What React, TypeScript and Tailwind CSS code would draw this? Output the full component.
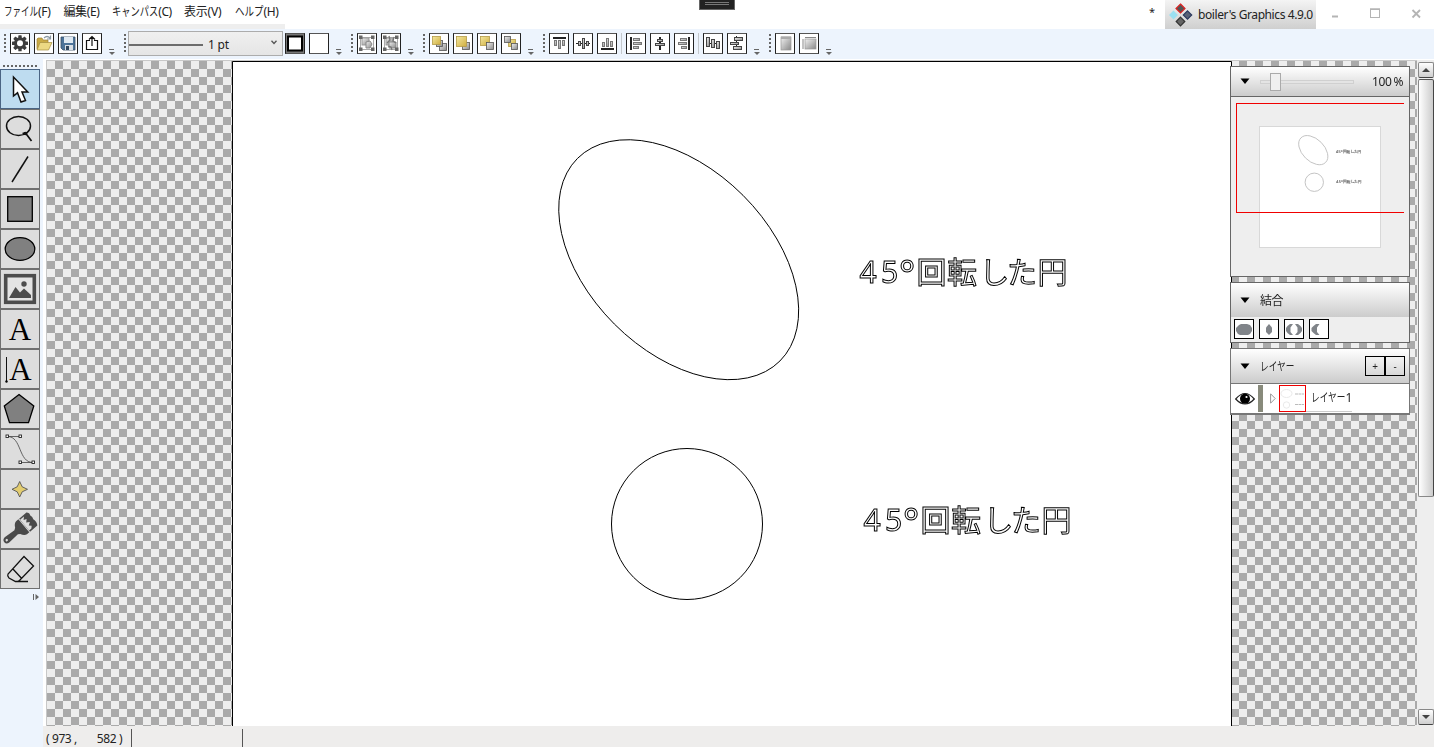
import React from "react";

type Kids = { children?: React.ReactNode };

function Kana({ text, size = 12, scale = 0.7 }: { text: string; size?: number; scale?: number }) {
  return (
    <span className="inline-block whitespace-nowrap tracking-normal" style={{ width: text.length * size * scale }}>
      <span className="inline-block origin-left" style={{ transform: `scaleX(${scale})` }}>
        {text}
      </span>
    </span>
  );
}

function Grip() {
  return (
    <svg className="mt-[5px] h-[20px] w-[2px] shrink-0" viewBox="0 0 2 20">
      {[0, 4, 8, 12, 16].map((y) => (
        <rect key={y} y={y} width="2" height="2" fill="#666" />
      ))}
    </svg>
  );
}

function Overflow() {
  return (
    <svg className="ml-[7px] mt-[20px] h-[6px] w-[6px] shrink-0" viewBox="0 0 6 6">
      <rect width="5" height="1" fill="#666" />
      <path d="M0 3H6L3 6Z" fill="#666" />
    </svg>
  );
}

function Btn({ children }: Kids) {
  return (
    <div className="mt-[4px] h-[21px] w-[20px] shrink-0 border border-[#222] border-y-[#555] bg-white">
      <svg className="block h-[19px] w-[18px]" viewBox="0 0 18 19">
        {children}
      </svg>
    </div>
  );
}

function Sep() {
  return <div className="mt-[4px] h-[21px] w-px shrink-0 bg-[#c4c8cc]" />;
}

const Y = "url(#gold)";
const G = "url(#steel)";

function Sq({ x, y, f, s = 7 }: { x: number; y: number; f: string; s?: number }) {
  return <rect x={x + 0.5} y={y + 0.5} width={s} height={s} fill={f} stroke={f === Y ? "#b39b46" : "#555"} strokeWidth="0.8" />;
}

function Bar({ x, y, w, h, dark, edge = "#777" }: { x: number; y: number; w: number; h: number; dark?: boolean; edge?: string }) {
  return dark ? (
    <rect x={x} y={y} width={w} height={h} fill="#222" />
  ) : (
    <rect x={x + 0.5} y={y + 0.5} width={w - 1} height={h - 1} fill={G} stroke={edge} strokeWidth="1" />
  );
}

function Toolbar() {
  return (
    <div className="flex h-[30px] shrink-0 items-start bg-[#edf4fd] pl-[4px]">
      <div className="flex w-[120px] gap-[4px]">
        <Grip />
        <Btn>
          <g fill="#3d3d3d">
            {[0, 45, 90, 135].map((a) => (
              <rect key={a} x="7.3" y="1.3" width="3.4" height="16" rx="0.6" transform={`rotate(${a} 9 9.3)`} />
            ))}
            <circle cx="9" cy="9.3" r="6" />
          </g>
          <circle cx="9" cy="9.3" r="3" fill="#fff" />
        </Btn>
        <Btn>
          <path d="M2 15V5L3 4H7L8 6H13V15Z" fill="#c9ab45" stroke="#9d8337" strokeWidth="0.7" />
          <path d="M2 16L5 8.5H17L13.5 16Z" fill="#ecd983" stroke="#a48c40" strokeWidth="0.7" />
          <path d="M9 4Q12 1 15 4M15.5 1.5V5H12" fill="none" stroke="#8998a3" strokeWidth="1.2" />
        </Btn>
        <Btn>
          <path d="M2 3H16V16H4L2 14Z" fill="#4c7399" stroke="#354c66" strokeWidth="0.8" />
          <rect x="5" y="3" width="9" height="6" fill="#dfe9f2" />
          <rect x="6" y="11" width="8" height="5" fill="#d9dfe5" />
          <rect x="7" y="12" width="3" height="4" fill="#30465e" />
        </Btn>
        <Btn>
          <path d="M7 6.5H3.5V15.5H14.5V6.5H11M9 12V2.5M6 5.5L9 2.5L12 5.5" fill="none" stroke="#111" strokeWidth="1.2" />
        </Btn>
        <div className="-ml-[4px]"><Overflow /></div>
      </div>
      <div className="flex w-[227px]">
        <Grip />
        <div className="ml-[2px] mt-[2px] flex h-[25px] w-[155px] items-center border border-[#acacac] bg-linear-to-b from-[#f0f0f0] to-[#e5e5e5]">
          <div className="mt-[2px] h-[2px] w-[74px] bg-[#6c6c6c]" />
          <span className="ml-[5px] mt-[3px] w-[61px] text-[12px] leading-[20px] tracking-[-0.2px]">1 pt</span>
          <svg className="mb-[2px] ml-[2px] h-[5px] w-[6px]" viewBox="0 0 6 5"><path d="M0.5 0.7L3 3.5L5.5 0.7" fill="none" stroke="#555" strokeWidth="1.3" /></svg>
        </div>
        <div className="ml-[2px] mr-[4px] flex">
          <Btn>
            <rect width="18" height="19" fill="#777" />
            <rect x="2" y="2.5" width="14" height="14" fill="#fff" stroke="#000" strokeWidth="2" />
          </Btn>
        </div>
        <Btn />
        <Overflow />
      </div>
      <div className="flex w-[72px] gap-[4px]">
        <Grip />
        {[0, 1].map((k) => (
          <Btn key={k}>
            <rect x="2.5" y="3.5" width="13" height="12" fill="none" stroke="#aaa" />
            <rect x="4" y="4" width="7" height="7" fill={G} stroke="#999" />
            <path d={k ? "M7 8H14V14H7Z" : "M8 8L12 7L14 10L12 14H8Z"} fill={G} stroke="#888" />
            {[[1, 1], [13, 1], [1, 13], [13, 13]].map(([x, y]) => (
              <rect key={`${x}-${y}`} x={x} y={y + 0.5} width="3.5" height="3.5" fill="#666" />
            ))}
            {k === 1 && <path d="M7 2L8 6L5 9M12 3L11 7L14 9M6 12L9 13L10 16" fill="none" stroke="#777" strokeWidth="1.3" />}
          </Btn>
        ))}
        <div className="-ml-[4px]"><Overflow /></div>
      </div>
      <div className="flex w-[120px] gap-[4px]">
        <Grip />
        <Btn><Sq x={9} y={9} f={G} /><Sq x={6} y={6} f={G} s={6} /><Sq x={2} y={2} f={Y} s={8} /></Btn>
        <Btn><Sq x={8} y={8} f={G} /><Sq x={2} y={2} f={Y} s={10} /></Btn>
        <Btn><Sq x={2} y={2} f={Y} s={9} /><Sq x={8} y={8} f={G} /></Btn>
        <Btn><Sq x={6} y={5} f={Y} s={7} /><Sq x={2} y={2} f={G} s={6} /><Sq x={9} y={9} f={G} s={6} /></Btn>
        <div className="-ml-[4px]"><Overflow /></div>
      </div>
      <div className="flex w-[226px] gap-[4px]">
        <Grip />
        <Btn><Bar x={3} y={3} w={13} h={2} dark /><Bar x={4} y={6} w={3} h={6} /><Bar x={8} y={6} w={3} h={9} /><Bar x={12} y={6} w={3} h={6} /></Btn>
        <Btn><Bar x={2} y={9} w={14} h={1} dark /><Bar x={4} y={7} w={3} h={5} edge="#444" /><Bar x={8} y={4} w={3} h={11} edge="#444" /><Bar x={12} y={7} w={3} h={5} edge="#444" /></Btn>
        <Btn><Bar x={3} y={14} w={13} h={2} dark /><Bar x={4} y={8} w={3} h={5} /><Bar x={8} y={4} w={3} h={9} /><Bar x={12} y={7} w={3} h={6} /></Btn>
        <Sep />
        <Btn><Bar x={3} y={3} w={2} h={13} dark /><Bar x={6} y={4} w={7} h={3} /><Bar x={6} y={8} w={9} h={3} /><Bar x={6} y={12} w={6} h={3} /></Btn>
        <Btn><Bar x={8} y={3} w={2} h={13} dark /><Bar x={6} y={5} w={6} h={3} edge="#444" /><Bar x={4} y={9} w={10} h={3} edge="#444" /></Btn>
        <Btn><Bar x={13} y={3} w={2} h={13} dark /><Bar x={5} y={4} w={7} h={3} /><Bar x={3} y={8} w={9} h={3} /><Bar x={6} y={12} w={6} h={3} /></Btn>
        <Sep />
        <Btn><Bar x={2} y={9} w={14} h={1} dark /><Bar x={2} y={3} w={4} h={10} edge="#444" /><Bar x={7} y={5} w={4} h={9} edge="#444" /><Bar x={12} y={7} w={4} h={8} edge="#444" /></Btn>
        <Btn><Bar x={8} y={2} w={1} h={14} dark /><Bar x={6} y={3} w={9} h={4} edge="#444" /><Bar x={2} y={8} w={9} h={3} edge="#444" /><Bar x={5} y={12} w={9} h={4} edge="#444" /></Btn>
        <div className="-ml-[4px]"><Overflow /></div>
      </div>
      <div className="flex w-[72px] gap-[4px]">
        <Grip />
        <Btn><rect x="5" y="3" width="10" height="13" fill={G} stroke="#999" strokeWidth="0.7" /><rect x="5" y="2.5" width="10" height="2.5" fill="#aaa" /></Btn>
        <Btn><rect x="5" y="5" width="11" height="10" fill={G} stroke="#999" strokeWidth="0.7" /><path d="M3 5V15M5 3.5H16" stroke="#888" strokeWidth="1" /></Btn>
        <div className="-ml-[4px]"><Overflow /></div>
      </div>
    </div>
  );
}

function Tool({ active, children }: Kids & { active?: boolean }) {
  return (
    <div className={active ? "h-[40px] w-[40px] border border-[#4a6484] bg-[#bedcf0]" : "h-[40px] w-[40px] border border-[#707070] bg-[#dddddd]"}>
      <svg className="block h-[38px] w-[38px]" viewBox="1 1 38 38">{children}</svg>
    </div>
  );
}

function Tools() {
  return (
    <div className="flex w-[43px] shrink-0 flex-col bg-[#edf4fd]">
      <svg className="ml-[3px] mt-[6px] h-[2px] w-[36px]" viewBox="0 0 36 2">
        {[0, 1, 2, 3, 4, 5, 6, 7, 8].map((i) => <rect key={i} x={i * 4} width="2" height="2" fill="#666" />)}
      </svg>
      <div className="mt-[2px] flex flex-col">
        <Tool active><path d="M13.5 8V27L17.5 23.8L21 33L25.5 31.5L22 23H27.8Z" fill="#fff" stroke="#111" strokeWidth="1.5" /></Tool>
        <Tool>
          <ellipse cx="18.5" cy="17" rx="12" ry="9.5" fill="none" stroke="#111" strokeWidth="1.5" />
          <path d="M22.5 24.5L27.5 23.5M25.5 24L31.5 32" fill="none" stroke="#111" strokeWidth="1.7" />
          <circle cx="25.3" cy="24.5" r="1.8" fill="#111" />
        </Tool>
        <Tool><path d="M12 33L28 7.5" stroke="#111" strokeWidth="1.5" /></Tool>
        <Tool><rect x="7.7" y="7.7" width="24.6" height="24.6" fill="#808080" stroke="#000" strokeWidth="1.3" /></Tool>
        <Tool><ellipse cx="20" cy="20" rx="14.8" ry="11.4" fill="#808080" stroke="#000" strokeWidth="1.3" /></Tool>
        <Tool>
          <rect x="5.7" y="6.7" width="28.6" height="26.6" fill="#e4e4e4" stroke="#4d4d4d" strokeWidth="3.6" />
          <path d="M9 29L15.5 18L20 23.5L24 19.5L31 26V29Z" fill="#4d4d4d" />
          <circle cx="24" cy="15" r="2.7" fill="#4d4d4d" />
        </Tool>
        <Tool><text x="20" y="30.5" textAnchor="middle" className="font-['Liberation_Serif',serif] text-[31px] tracking-normal">A</text></Tool>
        <Tool>
          <text x="20.5" y="30.5" textAnchor="middle" className="font-['Liberation_Serif',serif] text-[31px] tracking-normal">A</text>
          <path d="M6.5 8V33" stroke="#111" strokeWidth="1" /><circle cx="6.5" cy="32.5" r="1.2" />
        </Tool>
        <Tool><path d="M19 5.5L33.8 17L28.5 33.7H9.5L4.3 17Z" fill="#808080" stroke="#000" strokeWidth="1.3" /></Tool>
        <Tool>
          <path d="M7.5 7.5H20.5M20 33.5H33M7.5 7.5C22 7.5 18 33.5 33 33.5" fill="none" stroke="#444" strokeWidth="0.8" />
          {[[7, 7], [20, 7], [20, 33], [33, 33]].map(([x, y]) => (
            <rect key={`${x}-${y}`} x={x - 1} y={y - 1} width="2.5" height="2.5" fill="#fff" stroke="#222" strokeWidth="0.9" />
          ))}
        </Tool>
        <Tool><path d="M19.7 12.5L22.2 17.8L27.5 20.3L22.2 22.8L19.7 28L17.2 22.8L12 20.3L17.2 17.8Z" fill="#e2cc70" stroke="#555" strokeWidth="0.9" /></Tool>
        <Tool>
          <g transform="translate(20 20) rotate(50)" fill="#4a4a4a">
            <path d="M-8.5 -5V-2Q-8 1 -4 3L-2.7 5L-3.5 17Q-3 20.5 0 20.5T3.5 17L2.7 5L4 3Q8 1 8.5 -2V-5Z" />
            <path d="M-8.5 -6V-15.5Q-6.5 -18 -4 -16.5Q-1 -17.5 1 -16.5Q5 -18 8.5 -15.5V-6Z" />
            <path d="M-7 -6V-11L-4.5 -8.5L-3.5 -11.5L-1 -9L1 -12L3 -9L5 -11L7 -9V-6Z" fill="#dddddd" />
            <circle cy="17.3" r="1.2" fill="#dddddd" />
          </g>
        </Tool>
        <Tool>
          <path d="M24 7.5L33.5 17L19.5 31.5Q18 32.5 15.5 32.5L9 29Q7 27 8 25ZM12.5 19.5L21.5 29.2M15 32.5H28" fill="none" stroke="#111" strokeWidth="1.3" />
        </Tool>
      </div>
      <svg className="ml-[33px] mt-[5px] h-[6px] w-[6px]" viewBox="0 0 6 6"><path d="M0 0H1V6H0ZM2.5 0L6 3L2.5 6Z" fill="#666" /></svg>
    </div>
  );
}

function OutlineText({ dx, y, thumb }: { dx: number; y: number; thumb?: boolean }) {
  const at = (...xs: number[]) => xs.map((v) => v + dx).join(" ");
  return (
    <text
      y={y}
      fill={thumb ? "#999" : "none"}
      stroke={thumb ? "#777" : "#000"}
      strokeWidth={thumb ? 2 : 1}
      className="font-['Noto_Sans','Noto_Sans_CJK_JP',sans-serif] text-[30px] tracking-normal"
    >
      <tspan x={at(859.5, 881)}>45</tspan>
      <tspan x={at(899)} dy="5" className="text-[38px]">°</tspan>
      <tspan x={at(916.5, 947, 979.5, 1007, 1037.5)} dy="-5.5">回転した円</tspan>
    </text>
  );
}

function Artwork({ thumb }: { thumb?: boolean }) {
  const stroke = thumb ? "#c4c4c4" : "#000";
  return (
    <>
      <ellipse cx="678.7" cy="259.7" rx="143.2" ry="91" transform="rotate(45 678.7 259.7)" fill="none" stroke={stroke} strokeWidth="1" vectorEffect="non-scaling-stroke" />
      <circle cx="687" cy="524" r="75.5" fill="none" stroke={stroke} strokeWidth="1" vectorEffect="non-scaling-stroke" />
      <OutlineText dx={thumb ? 6 : 0} y={283} thumb={thumb} />
      <OutlineText dx={thumb ? 8 : 4} y={531} thumb={thumb} />
    </>
  );
}

function Caret() {
  return <svg className="h-[7px] w-[10px] shrink-0" viewBox="0 0 10 7"><path d="M0.5 0.5H9.5L5 6Z" fill="#000" /></svg>;
}

function Combine({ children }: Kids) {
  return (
    <div className="h-[20px] w-[20px] border border-black bg-white">
      <svg className="block h-[18px] w-[18px]" viewBox="0 0 18 18" fill="#808489">{children}</svg>
    </div>
  );
}

function Panels() {
  return (
    <div className="absolute left-[1183px] top-[5px] flex w-[180px] flex-col gap-[5px]">
      <div className="flex h-[211px] flex-col border border-[#666] bg-[#eee]">
        <div className="flex h-[30px] items-center border-b border-[#666] bg-linear-to-b from-white to-[#cccccc] pl-[9px]">
          <Caret />
          <div className="relative ml-[10px] h-[4px] w-[94px] border border-[#d0d0d0] bg-[#e4e4e4]">
            <div className="absolute left-[9px] top-[-8px] h-[18px] w-[11px] border border-[#aaa] bg-[#f0f0f0]" />
          </div>
          <span className="ml-[18px] whitespace-nowrap text-[12px] [word-spacing:-0.5px]">100 %</span>
        </div>
        <div className="relative ml-[5px] mt-[6px] h-[110px] w-[168px] pl-[23px] pt-[23px]">
          <svg className="block h-[122px] w-[122px]" viewBox="0 0 122 122">
            <rect x="0.5" y="0.5" width="121" height="121" fill="#fff" stroke="#d8d8d8" />
            <g transform="scale(0.1215) translate(-232 -61)"><Artwork thumb /></g>
          </svg>
          <div className="absolute inset-0 border border-r-0 border-[#f00000]" />
        </div>
      </div>
      <div className="flex h-[61px] flex-col border border-[#666] bg-[#eee]">
        <div className="flex h-[34px] items-center gap-[10px] bg-linear-to-b from-white to-[#cccccc] pl-[9px]">
          <Caret /><span className="mt-[2px] text-[12px]">結合</span>
        </div>
        <div className="flex gap-[5px] pl-[3px] pt-[2px]">
          <Combine><path d="M4 5L6 4H12L15 5L17 8V11L15 14L13 15H5L3 14L1 11V8Z" /></Combine>
          <Combine><path d="M9 4L12 7.5V12L9 15L6 12V7.5Z" /></Combine>
          <Combine><path d="M8 4L5.5 7.5V12L8 15H5L2.5 13L1 11V8L2.5 6L5 4ZM10 4L12.5 7.5V12L10 15H13L15.5 13L17 11V8L15.5 6L13 4Z" /></Combine>
          <Combine><path d="M9.5 4L7 7.5V12L9.5 15H6L3.5 13L1.5 11V8L3.5 6L6 4Z" /></Combine>
        </div>
      </div>
      <div className="flex h-[67px] flex-col border border-b-2 border-[#777] bg-white">
        <div className="flex h-[35px] shrink-0 items-center border-b border-[#777] bg-linear-to-b from-white to-[#cccccc] pl-[9px]">
          <Caret />
          <span className="ml-[10px] mt-[2px] w-[105px] text-[12px]"><Kana text="レイヤー" scale={0.72} /></span>
          <div className="flex h-[20px] w-[20px] items-center justify-center border border-black text-[10px]">+</div>
          <div className="flex h-[20px] w-[20px] items-center justify-center border border-black text-[10px]">-</div>
        </div>
        <div className="flex h-[29px] items-center pl-[4px]">
          <svg className="h-[14px] w-[20px]" viewBox="0 0 20 14">
            <path d="M0.7 7Q10-4 19.3 7Q10 17 0.7 7Z" fill="#fff" stroke="#222" strokeWidth="1.2" />
            <circle cx="10" cy="6.7" r="5" /><circle cx="11.5" cy="5" r="1.1" fill="#fff" />
          </svg>
          <div className="ml-[3px] h-[27px] w-[5px] bg-[#888a7b]" />
          <svg className="ml-[7px] h-[11px] w-[6px]" viewBox="0 0 6 11"><path d="M0.6 0.8V10.2L5.2 5.5Z" fill="#fff" stroke="#999" /></svg>
          <svg className="ml-[3px] h-[27px] w-[27px]" viewBox="0 0 27 27">
            <rect x="0.5" y="0.5" width="26" height="26" fill="#fff" stroke="#e00" />
            <g fill="none" stroke="#eaeaea"><ellipse cx="7.5" cy="8.5" rx="5.5" ry="4" /><circle cx="7.5" cy="20" r="3.2" /></g>
            <path d="M16 9H25M16 19.5H25" stroke="#aaa" strokeWidth="0.8" strokeDasharray="3 0.5" />
          </svg>
          <div className="flex h-[27px] w-[46px] items-center border-b border-[#ccc] pl-[5px] text-[12px]"><Kana text="レイヤー" scale={0.72} />1</div>
        </div>
      </div>
    </div>
  );
}

function ScrollArrow({ down }: { down?: boolean }) {
  return (
    <div className="flex h-[16px] w-[16px] items-center justify-center rounded-[2px] border border-[#888] border-b-[#444] bg-linear-to-b from-white to-[#cfcfcf]">
      <svg className="h-[4px] w-[8px]" viewBox="0 0 8 4"><path d={down ? "M0 0H8L4 4Z" : "M0 4H8L4 0Z"} fill="#444" /></svg>
    </div>
  );
}

export default function App() {
  return (
    <div className="flex h-[747px] w-[1434px] flex-col overflow-hidden bg-white font-['Noto_Sans','Noto_Sans_CJK_JP',sans-serif] text-[12px] tracking-[-0.4px] text-[#222]">
      <svg className="absolute h-0 w-0">
        <defs>
          <linearGradient id="gold" x1="0" y1="0" x2="1" y2="1"><stop stopColor="#f4e8a0" /><stop offset="1" stopColor="#cfae3f" /></linearGradient>
          <linearGradient id="steel" x1="0" y1="0" x2="1" y2="1"><stop stopColor="#f2f2f2" /><stop offset="1" stopColor="#888" /></linearGradient>
        </defs>
      </svg>
      <header className="relative flex h-[29px] shrink-0">
        <div className="flex w-[285px] flex-col">
          <nav className="flex h-[24px] items-center pl-[4px] leading-[24px]">
            <span className="w-[59.5px]"><Kana text="ファイル" scale={0.71} />(F)</span>
            <span className="w-[48.5px]">編集(E)</span>
            <span className="w-[72px]"><Kana text="キャンパス" scale={0.77} />(C)</span>
            <span className="w-[51px] tracking-[-0.2px]">表示(V)</span>
            <span><Kana text="ヘルプ" scale={0.79} />(H)</span>
          </nav>
          <div className="h-[5px] bg-[#eee]" />
        </div>
        <div className="absolute left-[699px] top-0 flex h-[10px] w-[36px] flex-col items-center gap-px border border-t-0 border-[#666] bg-[#222] pt-[2px]">
          <div className="h-px w-[24px] bg-[#777]" />
          <div className="h-px w-[24px] bg-[#777]" />
        </div>
        <span className="ml-[864px] mt-[4px] w-[16px] text-[11px]">*</span>
        <div className="flex h-[29px] w-[151px] items-center whitespace-nowrap bg-linear-to-b from-[#f4f4f4] to-[#cfcfcf]">
          <svg className="ml-[4px] h-[24px] w-[24px] shrink-0" viewBox="0 0 24 24">
            <path d="M11.5 1L16 5.5L11.5 10L7 5.5Z" fill="#555" stroke="#d22" strokeWidth="1.2" />
            <path d="M4.5 7.5L9 12L4.5 16.5L0 12Z" fill="#9be0f2" />
            <path d="M18.5 7.8L22.7 12L18.5 16.2L14.3 12Z" fill="#586176" stroke="#2e3b60" strokeWidth="1.2" />
            <path d="M11.5 14.2L15.8 18.5L11.5 22.8L7.2 18.5Z" fill="#666" stroke="#333" strokeWidth="1.2" />
          </svg>
          <span className="ml-[5px] text-[12px]">boiler's Graphics 4.9.0</span>
        </div>
        <svg className="ml-[15px] mt-[7px] h-[13px] w-[90px]" viewBox="0 0 90 13" fill="none" stroke="#b4b4b4">
          <path d="M1 9.5H7" strokeWidth="2" />
          <rect x="39.5" y="2.5" width="9" height="8" strokeWidth="1" /><path d="M39 2H49" strokeWidth="1.5" />
          <path d="M81.5 3L89 10.5M89 3L81.5 10.5" strokeWidth="1.8" />
        </svg>
      </header>
      <Toolbar />
      <div className="flex min-h-0 flex-1">
        <Tools />
        <div className="flex min-w-0 flex-1 flex-col">
          <div className="flex h-[667px] pl-[3px] pt-px">
            <div className="relative w-[1371px] border-l border-t border-[#c8c8c8] bg-[conic-gradient(#aaa_25%,#eee_0_50%,#aaa_0_75%,#eee_0)] bg-[length:16px_16px]">
              <svg className="ml-[185px] block h-[665px] w-[1000px] will-change-transform" viewBox="232 61 1000 665">
                <path d="M232.5 730V61.5H1231.5V730" fill="#fff" stroke="#000" />
                <Artwork />
              </svg>
              <Panels />
            </div>
            <div className="flex w-[17px] flex-col bg-[#eee] pl-px pt-[2px]">
              <ScrollArrow />
              <div className="mt-px h-[418px] w-[16px] rounded-[2px] border border-[#888] border-r-[#444] border-t-[#555] bg-linear-to-r from-white to-[#cccccc]" />
              <div className="mb-px mt-auto"><ScrollArrow down /></div>
            </div>
          </div>
          <footer className="flex min-h-0 flex-1 bg-[#eeedec]">
            <div className="mt-[3px] w-[89px] whitespace-pre border-r border-[#555] pl-[3px] text-[12px] leading-[19px]">( 973 ,<span className="inline-block w-[20px]" />582 )</div>
            <div className="mt-[3px] w-[111px] border-r border-[#555]" />
          </footer>
        </div>
      </div>
    </div>
  );
}
